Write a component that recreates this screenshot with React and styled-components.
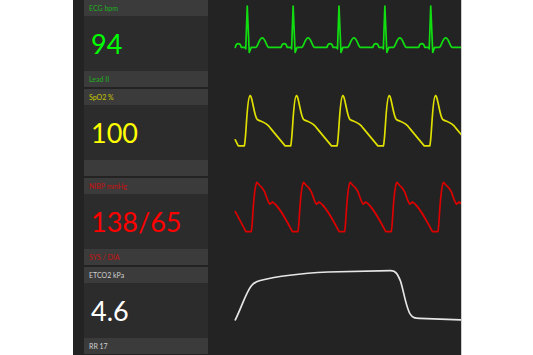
import React from "react";
import styled, { createGlobalStyle } from "styled-components";

const Global = createGlobalStyle`
  html, body { margin: 0; padding: 0; background: #ffffff; }
  body { font-family: Lato, "Open Sans", sans-serif; overflow: hidden; }
`;

const Monitor = styled.div`
  display: flex;
  margin-left: 73px;
  width: 389px;
  height: 355px;
  padding-left: 11px;
  box-sizing: border-box;
  background: #232323;
  border-right: 1px solid #cfcfcf;
`;

const Column = styled.div`
  display: flex;
  flex-direction: column;
  gap: 2px;
  width: 124px;
`;

const Card = styled.div`
  display: flex;
  flex-direction: column;
  height: 87px;
  background: #2c2c2c;
`;

const Band = styled.div`
  height: 16px;
  display: flex;
  align-items: center;
  padding-left: 5px;
  background: #3b3b3b;
  color: ${(p) => p.$color};
  font-size: 7px;
  white-space: nowrap;
`;

const Body = styled.div`
  flex: 1;
  display: flex;
  align-items: center;
  padding-left: 7px;
  color: ${(p) => p.$color};
  font-size: 27px;
  line-height: 1;
`;

const Traces = styled.div`
  display: flex;
  flex-direction: column;
  width: 253px;
`;

const Trace = styled.svg`
  display: block;
  width: 253px;
  height: 89px;
  overflow: hidden;
`;

function ecgPath() {
  const yb = 47.5;
  let d = `M 27 ${yb}`;
  for (let k = 0; k < 6; k++) {
    const b = 27 + 46 * k;
    d += ` C ${b + 1} 42.5 ${b + 5} 42.5 ${b + 6} ${yb}`;
    d += ` L ${b + 9.5} ${yb} L ${b + 10.5} 49 L ${b + 12} 6 L ${b + 14} 52.5 L ${b + 16} ${yb}`;
    d += ` L ${b + 20.5} ${yb} C ${b + 22.5} ${yb} ${b + 24} 38 ${b + 27} 38 C ${b + 30} 38 ${b + 31.5} ${yb} ${b + 33.5} ${yb}`;
    d += ` L ${b + 46} ${yb}`;
  }
  return d;
}

function spo2Path() {
  let d = "M 27 51 L 30 57 L 36 57";
  for (let k = 0; k < 6; k++) {
    const b = 36 + 46.5 * k;
    d += ` C ${b + 2} 52 ${b + 2.5} 8 ${b + 5.7} 6.7`;
    d += ` C ${b + 8} 6 ${b + 10} 28 ${b + 13} 30.5`;
    d += ` C ${b + 17} 33 ${b + 22} 33 ${b + 26} 39`;
    d += ` L ${b + 41} 57 L ${b + 46.5} 57`;
  }
  return d;
}

function nibpPath() {
  let d = "M 27 33.7 L 37.7 53.7 L 43 53.7";
  for (let k = 0; k < 6; k++) {
    const b = 43 + 46.8 * k;
    d += ` C ${b + 1.5} 50 ${b + 2} 8 ${b + 5.7} 4.3`;
    d += ` L ${b + 8.5} 7.5 L ${b + 11} 10 L ${b + 13} 13`;
    d += ` C ${b + 15} 17 ${b + 16.5} 24 ${b + 18.7} 26.3`;
    d += ` L ${b + 21.3} 24`;
    d += ` C ${b + 27} 27 ${b + 34} 40 ${b + 41.3} 53.7`;
    d += ` L ${b + 46.8} 53.7`;
  }
  return d;
}

const etco2 =
  "M 27 54 C 33 42 38 26 43 20 C 46 16.5 48 15.5 52 14.5 C 70 10 90 7.5 120 6 L 182.7 4.7 C 188 4.7 190 8 193 16 C 196 26 199 45 203 49 C 205 52 207 52.3 212 52.5 L 253 54";

const vitals = [
  { label: "ECG bpm", value: "94", foot: "Lead II", dim: "#1fb01f", bright: "#00ff00", stroke: "#11dd11", d: ecgPath() },
  { label: "SpO2 %", value: "100", foot: "", dim: "#c8c800", bright: "#ffff00", stroke: "#e0e000", d: spo2Path() },
  { label: "NIBP mmHg", value: "138/65", foot: "SYS / DIA", dim: "#c81010", bright: "#ff0000", stroke: "#dd0000", d: nibpPath() },
  { label: "ETCO2 kPa", value: "4.6", foot: "RR 17", dim: "#d0d0d0", bright: "#ffffff", stroke: "#e6e6e6", d: etco2 },
];

export default function App() {
  return (
    <>
      <Global />
      <Monitor>
        <Column>
          {vitals.map((v) => (
            <Card key={v.label}>
              <Band $color={v.dim}>{v.label}</Band>
              <Body $color={v.bright}>{v.value}</Body>
              <Band $color={v.dim}>{v.foot}</Band>
            </Card>
          ))}
        </Column>
        <Traces>
          {vitals.map((v) => (
            <Trace key={v.label} viewBox="0 0 253 89">
              <path d={v.d} fill="none" stroke={v.stroke} strokeWidth="1.7" strokeLinejoin="round" strokeLinecap="round" />
            </Trace>
          ))}
        </Traces>
      </Monitor>
    </>
  );
}
